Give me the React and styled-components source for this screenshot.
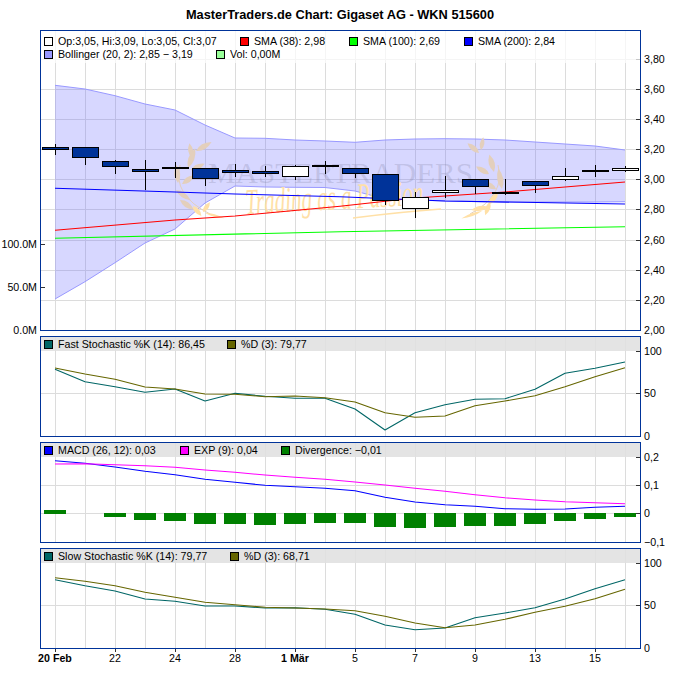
import React from 'react';
import styled, { createGlobalStyle } from 'styled-components';

const FRAME = '#003399';
const GRID = '#dcdcdc';
const DAYS = Array.from({ length: 20 }, (_, i) => 55 + i * 30);

const GlobalStyle = createGlobalStyle`
  html, body {
    margin: 0;
    padding: 0;
    background: #fff;
  }
  body {
    font-family: "Liberation Sans", Arial, sans-serif;
    font-size: 10.67px;
    color: #000;
  }
`;

const Page = styled.div`
  width: 680px;
  height: 684px;
  overflow: hidden;
  display: flex;
  flex-direction: column;
  gap: 5px;
`;

const Title = styled.h1`
  margin: 0 0 -5px;
  height: 30px;
  padding-top: 7px;
  box-sizing: border-box;
  text-align: center;
  font-size: 12.8px;
  line-height: 15px;
  font-weight: 700;
`;

const Row = styled.section`
  display: flex;
  align-items: flex-start;
`;

const Gutter = styled.svg`
  display: block;
  flex: none;
  width: ${({ $width }) => $width}px;
  height: ${({ $height }) => $height}px;
  overflow: visible;
  font-family: "Liberation Sans", Arial, sans-serif;
  font-size: 10.67px;
`;

const Plot = styled.div`
  position: relative;
  flex: none;
  width: 601px;
  height: ${({ $height }) => $height}px;
  box-sizing: border-box;
  border: 1px solid ${FRAME};
  background: #fff;
`;

const PlotSvg = styled.svg`
  display: block;
  width: 599px;
  height: 100%;
`;

const LegendBand = styled.div`
  position: absolute;
  top: 0;
  left: 0;
  right: 0;
  height: ${({ $tall }) => ($tall ? 32 : 14)}px;
  padding: ${({ $tall }) => ($tall ? '3px 0 0 3px' : '0 0 0 3px')};
  box-sizing: border-box;
  background: ${({ $tall }) => ($tall ? 'rgba(255,255,255,0.72)' : 'rgba(224,224,224,0.88)')};
  display: flex;
  flex-direction: column;
`;

const LegendRow = styled.div`
  display: flex;
  height: ${({ $tall }) => ($tall ? 13 : 14)}px;
  align-items: center;
`;

const LegendItem = styled.div`
  flex: none;
  width: ${({ $width }) => ($width ? `${$width}px` : 'auto')};
  display: flex;
  align-items: center;
  gap: 5px;
  line-height: 14px;
  white-space: nowrap;
`;

const Swatch = styled.span`
  flex: none;
  width: 7px;
  height: 7px;
  border: 1px solid #000;
  box-sizing: content-box;
  margin: 1px 0 0 0;
  background: ${({ $color }) => $color};
`;

const candles = [
  [55, 144, 155, 147, 150, 0],
  [85, 147, 165, 147, 158, 0],
  [115, 160, 174, 161, 167, 0],
  [145, 160, 190, 169, 172, 0],
  [175, 162, 178, 167, 169, 0],
  [205, 168, 186, 168, 179, 0],
  [235, 164, 177, 170, 173, 0],
  [265, 166, 177, 171, 174, 0],
  [295, 165, 180, 166, 177, 1],
  [325, 161, 174, 165, 167, 0],
  [355, 168, 178, 168, 174, 0],
  [385, 174, 205, 174, 201, 0],
  [415, 192, 218, 197, 209, 1],
  [445, 176, 198, 190, 193, 1],
  [475, 179, 194, 179, 187, 0],
  [505, 179, 195, 192, 194, 1],
  [535, 181, 193, 181, 186, 0],
  [565, 168, 181, 176, 180, 1],
  [595, 165, 177, 170, 172, 0],
  [625, 166, 172, 168, 171, 1],
];

const bollUpper = [85.3, 89, 95.7, 104, 110, 125, 138, 138.3, 140, 141, 142.3, 140, 139, 138.7, 139, 140, 142, 144, 146, 150];
const bollLower = [299, 281.7, 262.7, 243, 229, 203, 186, 187, 187.3, 187.5, 191, 199, 200, 201, 201.5, 202, 202, 202, 202, 201.7];

const fastK = [369.3, 381.7, 386.7, 392.3, 389, 401, 393.3, 396.3, 398.3, 398.3, 409, 430, 412.7, 404.7, 399.3, 398.7, 389.3, 373.3, 368.3, 362];
const fastD = [368, 374, 379.3, 387, 389, 394, 394.3, 396.7, 396, 397.7, 402, 412.7, 417.3, 416, 405.7, 401, 395.7, 386.7, 376.7, 367.7];
const macdLine = [460.7, 463.3, 467, 471.3, 474.7, 479.3, 482.3, 485.3, 486.7, 488.3, 490.7, 497.3, 502, 504.7, 506.3, 508.7, 509.3, 509, 507.3, 506.3];
const expLine = [464, 463.7, 464.7, 465.7, 467.3, 470, 472.3, 475, 477.3, 479.3, 482, 485, 488.3, 491.3, 494.7, 497.7, 500, 501.7, 502.7, 503.7];
const macdBars = [510, 513, 517, 520, 521, 524, 524, 525, 524, 523, 523, 527, 528, 527, 526, 526, 524, 521, 519, 517];
const slowK = [579.7, 585.7, 591, 599, 601.3, 606, 606, 608, 607.7, 609.3, 614.3, 625, 629.7, 628, 617.7, 613, 607.7, 599, 588.7, 579.7];
const slowD = [577.7, 581.3, 585.7, 592.3, 597.3, 602.3, 604.7, 607.3, 608, 609, 610.7, 616.3, 623, 627.7, 625, 619.3, 612.3, 606.3, 598.7, 589.3];

const toPoints = (ys) => ys.map((y, i) => `${DAYS[i]},${y}`).join(' ');
const sma200 = '55,188.3 175,192 235,194 340,196.7 445,201 625,204';
const sma38 = '55,230.3 175,220 235,216 340,206.3 415,198 505,192 625,182';
const sma100 = '55,238.3 340,231.7 625,226.7';

const Grid = ({ top, bottom, rows }) => (
  <g stroke={GRID} shapeRendering="crispEdges">
    {DAYS.map((x) => (
      <line key={x} x1={x + 0.5} x2={x + 0.5} y1={top} y2={bottom} />
    ))}
    {rows.map((y) => (
      <line key={y} x1={41} x2={640} y1={y + 0.5} y2={y + 0.5} />
    ))}
  </g>
);

const Line = ({ points, color }) => (
  <polyline points={points} fill="none" stroke={color} strokeWidth="1.1" strokeLinejoin="round" />
);

const Leaf = ({ x, y, len, wide, angle, color }) => (
  <path
    d={`M0 0 Q${len * 0.45} ${-wide} ${len} 0 Q${len * 0.45} ${wide} 0 0Z`}
    transform={`translate(${x} ${y}) rotate(${angle})`}
    fill={color}
  />
);

const TAN = '#e3cfbc';
const PALE = '#ffe0a6';

const leftLeaves = [
  [196, 151, 18, 5.5, -30, TAN],
  [192, 158, 15, 5, -100, TAN],
  [188, 168, 21, 6, -70, TAN],
  [191, 170, 15, 5, -25, TAN],
  [178, 183, 18, 6, -95, TAN],
  [182, 184, 15, 5.5, -35, TAN],
  [176, 190, 18, 5, 35, TAN],
  [180, 200, 17, 5.5, 35, TAN],
  [193, 206, 13, 5, 50, PALE],
  [203, 212, 12, 4.5, -55, PALE],
  [205, 213, 20, 2.5, 15, PALE],
];

const rightLeaves = [
  [479, 153, 15, 5.5, -140, TAN],
  [481, 150, 13, 4.5, -80, TAN],
  [494, 172, 18, 6, -105, TAN],
  [489, 174, 15, 5.5, -150, TAN],
  [502, 189, 21, 6, -100, TAN],
  [496, 189, 15, 5.5, -150, TAN],
  [498, 193, 15, 5, 130, PALE],
  [490, 202, 14, 5, 110, PALE],
  [488, 207, 17, 5, 170, PALE],
  [482, 211, 22, 3, 160, PALE],
];

const Watermark = () => (
  <g>
    <path d="M180 165 Q172 195 210 214" fill="none" stroke={TAN} strokeWidth="1" />
    <path d="M498 165 Q506 195 470 214" fill="none" stroke={TAN} strokeWidth="1" />
    {[...leftLeaves, ...rightLeaves].map(([x, y, len, wide, angle, color]) => (
      <Leaf key={`${x}-${y}`} x={x} y={y} len={len} wide={wide} angle={angle} color={color} />
    ))}
    <text
      x="208"
      y="183"
      fontFamily='"Liberation Serif", serif'
      fontSize="30"
      textLength="265"
      lengthAdjust="spacingAndGlyphs"
      fill="#8080a0"
      fillOpacity="0.26"
    >
      MASTERTRADERS
    </text>
    <text
      x="246"
      y="214"
      fontFamily='"Liberation Serif", serif'
      fontStyle="italic"
      fontSize="36"
      textLength="178"
      lengthAdjust="spacingAndGlyphs"
      fill={PALE}
      transform="rotate(-3 246 214)"
    >
      Trading as a Passion
    </text>
    <path d="M353 218 Q400 212 441 209" fill="none" stroke={PALE} strokeWidth="1.5" />
  </g>
);

const Candles = () => (
  <g shapeRendering="crispEdges">
    {candles.map(([x, high, low, top, bottom, up]) => (
      <g key={x}>
        <line x1={x + 0.5} x2={x + 0.5} y1={high} y2={low} stroke="#000" />
        <rect
          x={x - 13 + 0.5}
          y={top + 0.5}
          width={26}
          height={Math.max(bottom - top - 1, 1)}
          fill={up ? '#fff' : '#003399'}
          stroke="#000"
        />
      </g>
    ))}
  </g>
);

const RightAxis = ({ top, height, ticks }) => (
  <Gutter $width={39} $height={height} viewBox={`641 ${top} 39 ${height}`}>
    {ticks.map(([y, label]) => (
      <text key={label} x="644" y={y + 4}>
        {label}
      </text>
    ))}
  </Gutter>
);

const LeftAxis = ({ top, height, ticks = [] }) => (
  <Gutter $width={40} $height={height} viewBox={`0 ${top} 40 ${height}`}>
    {ticks.map(([y, label]) => (
      <text key={label} x="37" y={y + 4} textAnchor="end">
        {label}
      </text>
    ))}
  </Gutter>
);

const TickMarks = ({ ticks, side }) => (
  <g stroke="#333" shapeRendering="crispEdges">
    {ticks.map(([y]) =>
      side === 'left' ? (
        <line key={y} x1={41} x2={45} y1={y + 0.5} y2={y + 0.5} />
      ) : (
        <line key={y} x1={636} x2={640} y1={y + 0.5} y2={y + 0.5} />
      ),
    )}
  </g>
);

const Legend = ({ rows, tall }) => (
  <LegendBand $tall={tall}>
    {rows.map((items, i) => (
      <LegendRow key={i} $tall={tall}>
        {items.map(([color, text, width]) => (
          <LegendItem key={text} $width={width}>
            <Swatch $color={color} />
            <span>{text}</span>
          </LegendItem>
        ))}
      </LegendRow>
    ))}
  </LegendBand>
);

const priceTicks = [
  [59, '3,80'], [89, '3,60'], [119, '3,40'], [149, '3,20'], [179, '3,00'],
  [209, '2,80'], [240, '2,60'], [270, '2,40'], [300, '2,20'], [330, '2,00'],
];
const volumeTicks = [[244, '100.0M'], [287, '50.0M'], [330, '0.0M']];
const fastTicks = [[351, '100'], [393, '50'], [436, '0']];
const macdTicks = [[457, '0,2'], [485, '0,1'], [513, '0'], [542, '−0,1']];
const slowTicks = [[563, '100'], [605, '50'], [648, '0']];

const xLabels = [
  ['20 Feb', 55, true], ['22', 115], ['24', 175], ['28', 235], ['1 Mär', 295, true],
  ['5', 355], ['7', 415], ['9', 475], ['13', 535], ['15', 595],
];

const Panel = ({ top, height, right, left, legend, tall, children }) => (
  <Row>
    <LeftAxis top={top} height={height} ticks={left} />
    <Plot $height={height}>
      <PlotSvg viewBox={`41 ${top + 1} 599 ${height - 2}`}>
        {children}
        <TickMarks ticks={right.slice(0, -1)} side="right" />
        {left && <TickMarks ticks={left} side="left" />}
      </PlotSvg>
      <Legend rows={legend} tall={tall} />
    </Plot>
    <RightAxis top={top} height={height} ticks={right} />
  </Row>
);

const BottomAxis = styled.svg`
  display: block;
  width: 680px;
  height: 35px;
  margin-top: -5px;
  font-family: "Liberation Sans", Arial, sans-serif;
  font-size: 10.67px;
`;

export default function App() {
  return (
    <Page>
      <GlobalStyle />
      <Title>MasterTraders.de Chart: Gigaset AG - WKN 515600</Title>

      <Panel
        top={30}
        height={301}
        right={priceTicks}
        left={volumeTicks}
        tall
        legend={[
          [
            ['#fff', 'Op:3,05, Hi:3,09, Lo:3,05, Cl:3,07', 196],
            ['#ff0000', 'SMA (38): 2,98', 109],
            ['#00ff00', 'SMA (100): 2,69', 115],
            ['#0000ff', 'SMA (200): 2,84'],
          ],
          [
            ['#9999ff', 'Bollinger (20, 2): 2,85 − 3,19', 172],
            ['#99ff99', 'Vol: 0,00M'],
          ],
        ]}
      >
        <Grid top={31} bottom={330} rows={priceTicks.slice(0, -1).map(([y]) => y)} />
        <polygon
          points={`${toPoints(bollUpper)} ${toPoints(bollLower).split(' ').reverse().join(' ')}`}
          fill="#6666ff"
          fillOpacity="0.26"
        />
        <polyline points={toPoints(bollUpper)} fill="none" stroke="#9999ff" />
        <polyline points={toPoints(bollLower)} fill="none" stroke="#9999ff" />
        <Watermark />
        <Line points={sma100} color="#00ff00" />
        <Line points={sma38} color="#ff0000" />
        <Line points={sma200} color="#0000ff" />
        <Candles />
      </Panel>

      <Panel
        top={336}
        height={101}
        right={fastTicks}
        legend={[[
          ['#006666', 'Fast Stochastic %K (14): 86,45', 183],
          ['#666600', '%D (3): 79,77'],
        ]]}
      >
        <Grid top={337} bottom={436} rows={[393]} />
        <Line points={toPoints(fastK)} color="#006666" />
        <Line points={toPoints(fastD)} color="#666600" />
      </Panel>

      <Panel
        top={442}
        height={101}
        right={macdTicks}
        legend={[[
          ['#0000ff', 'MACD (26, 12): 0,03', 136],
          ['#ff00ff', 'EXP (9): 0,04', 101],
          ['#008000', 'Divergence: −0,01'],
        ]]}
      >
        <Grid top={443} bottom={542} rows={[485, 513]} />
        <g shapeRendering="crispEdges" fill="#008000">
          {macdBars.map((y, i) =>
            y === 513 ? null : (
              <rect key={DAYS[i]} x={DAYS[i] - 11} y={Math.min(y, 513)} width={22} height={Math.abs(y - 513) + (y < 513 ? 1 : 0)} />
            ),
          )}
        </g>
        <Line points={toPoints(macdLine)} color="#0000ff" />
        <Line points={toPoints(expLine)} color="#ff00ff" />
      </Panel>

      <Panel
        top={548}
        height={101}
        right={slowTicks}
        legend={[[
          ['#006666', 'Slow Stochastic %K (14): 79,77', 186],
          ['#666600', '%D (3): 68,71'],
        ]]}
      >
        <Grid top={549} bottom={648} rows={[605]} />
        <Line points={toPoints(slowK)} color="#006666" />
        <Line points={toPoints(slowD)} color="#666600" />
      </Panel>

      <BottomAxis viewBox="0 649 680 35">
        {xLabels.map(([label, x, bold]) => (
          <g key={label}>
            <line x1={x + 0.5} x2={x + 0.5} y1={649} y2={652} stroke="#333" shapeRendering="crispEdges" />
            <text x={x} y="662" textAnchor="middle" fontWeight={bold ? 700 : 400}>
              {label}
            </text>
          </g>
        ))}
      </BottomAxis>
    </Page>
  );
}
